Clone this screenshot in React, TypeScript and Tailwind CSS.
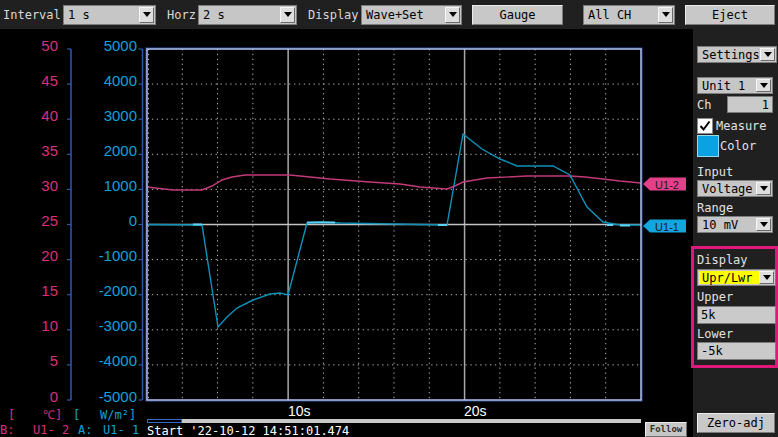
import React from 'react'

const X0 = 147
const X1 = 641
const Y0 = 20
const Y1 = 371
const DX = (X1 - X0) / 14
const DY = (Y1 - Y0) / 10
const TOP = 29 // page y where the chart svg starts

const pinkLabels = ['50', '45', '40', '35', '30', '25', '20', '15', '10', '5', '0']
const blueLabels = ['5000', '4000', '3000', '2000', '1000', '0', '-1000', '-2000', '-3000', '-4000', '-5000']

// trace points in page coordinates
const pinkTrace = [
  [147, 187], [173, 190], [202, 190], [212, 186], [222, 180], [232, 177], [245, 175], [290, 175],
  [330, 179], [370, 182], [400, 184], [420, 187], [447, 189], [455, 186], [463, 182], [487, 178],
  [527, 176], [570, 176], [585, 177], [603, 179], [620, 181], [641, 183],
]
const blueTrace = [
  [147, 224.5], [202, 225], [218, 327], [227, 317], [237, 308], [253, 300], [270, 294], [280, 293],
  [288, 295], [307, 223], [320, 222], [340, 223], [447, 225], [463, 134], [482, 149], [500, 159],
  [517, 166], [553, 166], [570, 175], [587, 207], [603, 222], [620, 225], [641, 225],
]
const highlights = [
  [193, 202, 224.5], [307, 335, 222.5], [438, 447, 225], [607, 613, 225], [620, 630, 225.5],
]

const toPts = (pts: number[][]) => pts.map(([x, y]) => `${x},${y - TOP}`).join(' ')

const Arrow = () => (
  <div className="flex h-full w-[15px] items-center justify-center border border-t-[#f6f6f6] border-l-[#f6f6f6] border-r-[#6a6a6a] border-b-[#6a6a6a] bg-[#dedede]">
    <div className="h-0 w-0 border-l-[4px] border-r-[4px] border-t-[5px] border-l-transparent border-r-transparent border-t-black" />
  </div>
)

const Select = ({ value, className = '', textBg = '' }: { value: string; className?: string; textBg?: string }) => (
  <div className={`flex items-stretch border border-[#7c7c7c] bg-[#c6c6c6] p-[1px] ${className}`}>
    <span className={`flex flex-1 items-center pl-[3px] text-[12px] leading-none text-black ${textBg}`}>{value}</span>
    <Arrow />
  </div>
)

const Button = ({ label, className = '' }: { label: string; className?: string }) => (
  <div className={`flex items-center justify-center border border-t-[#ececec] border-l-[#ececec] border-r-[#7a7a7a] border-b-[#7a7a7a] bg-[#c8c8c8] text-[12px] leading-none text-black ${className}`}>
    {label}
  </div>
)

const Field = ({ value, className = '' }: { value: string; className?: string }) => (
  <div className={`flex items-center border border-[#7c7c7c] bg-[#cacaca] px-[3px] text-[12px] leading-none text-black ${className}`}>
    {value}
  </div>
)

const Chart = () => (
  <svg width="693" height="375" className="block">
    {/* left axes */}
    <line x1="71" y1={Y0} x2="71" y2={Y1} stroke="#2c5aa8" strokeWidth="1.5" />
    <line x1="142.5" y1={Y0} x2="142.5" y2={Y1} stroke="#2c5aa8" strokeWidth="1.5" />
    {pinkLabels.map((l, j) => {
      const y = Y0 + j * DY
      return (
        <g key={l}>
          <line x1="67" y1={y} x2="71" y2={y} stroke="#2c5aa8" strokeWidth="1.2" />
          <line x1="138.5" y1={y} x2="142.5" y2={y} stroke="#2c5aa8" strokeWidth="1.2" />
          <text x="58" y={y + 1.5} textAnchor="end" fontSize="15" fill="#d8307e" fontFamily="Liberation Sans, Arial, sans-serif">
            {l}
          </text>
          <text x="137" y={y + 1.5} textAnchor="end" fontSize="15" fill="#12a0d8" fontFamily="Liberation Sans, Arial, sans-serif">
            {blueLabels[j]}
          </text>
        </g>
      )
    })}

    {/* grid */}
    {Array.from({ length: 14 }, (_, i) => {
      const x = X0 + i * DX
      if (i === 4 || i === 9) return <line key={i} x1={x} y1={Y0} x2={x} y2={Y1} stroke="#a8a8a8" strokeWidth="1.5" />
      return <line key={i} x1={i === 0 ? x + 1.5 : x} y1={Y0} x2={i === 0 ? x + 1.5 : x} y2={Y1} stroke="#b4b4b4" strokeWidth="1" strokeDasharray="1.3 3.6" />
    })}
    {Array.from({ length: 9 }, (_, k) => {
      const j = k + 1
      const y = Y0 + j * DY
      if (j === 5) return null
      return <line key={j} x1={X0} y1={y} x2={X1} y2={y} stroke="#b4b4b4" strokeWidth="1" strokeDasharray="1.3 3.6" />
    })}

    {/* traces */}
    <polyline points={toPts(pinkTrace)} fill="none" stroke="#c23a78" strokeWidth="1.4" />
    <line x1={X0} y1={Y0 + 5 * DY} x2={X1} y2={Y0 + 5 * DY} stroke="#c4c4c4" strokeWidth="1.6" />
    <polyline points={toPts(blueTrace)} fill="none" stroke="#0e92b8" strokeWidth="1.4" />
    {highlights.map(([a, b, y]) => (
      <line key={a} x1={a} y1={y - TOP} x2={b} y2={y - TOP} stroke="#5cd2f6" strokeWidth="2" />
    ))}

    {/* frame */}
    <rect x={X0 - 1} y={Y0 - 1} width={X1 - X0 + 2} height={Y1 - Y0 + 2} fill="none" stroke="#2c50a0" strokeWidth="1" />
    <rect x={X0} y={Y0} width={X1 - X0} height={Y1 - Y0} fill="none" stroke="#b4c4f4" strokeWidth="1.5" />

    {/* channel markers */}
    <polygon points="643,155 650,148.5 686,148.5 686,161.5 650,161.5" fill="#e4408a" />
    <text x="667" y="159.5" textAnchor="middle" fontSize="11" fill="#1a1a1a" fontFamily="Liberation Sans, Arial, sans-serif">U1-2</text>
    <polygon points="643,197 650,190.5 686,190.5 686,203.5 650,203.5" fill="#12a6de" />
    <text x="667" y="201.5" textAnchor="middle" fontSize="11" fill="#1a1a1a" fontFamily="Liberation Sans, Arial, sans-serif">U1-1</text>
  </svg>
)

export default function App() {
  return (
    <div className="flex h-[437px] w-[778px] flex-col overflow-hidden bg-black font-['DejaVu_Sans_Mono',monospace]">
      {/* Top bar */}
      <div className="flex h-[29px] items-center bg-[#202020] pl-[3px] text-[12px] text-[#d8d8d8]">
        <span className="w-[58px]">Interval</span>
        <Select value="1 s" className="ml-[2px] h-[20px] w-[93px]" />
        <span className="ml-[11px] w-[29px]">Horz</span>
        <Select value="2 s" className="ml-[2px] h-[20px] w-[99px]" />
        <span className="ml-[11px] w-[51px]">Display</span>
        <Select value="Wave+Set" className="ml-[2px] h-[20px] w-[101px]" />
        <Button label="Gauge" className="ml-[10px] h-[20px] w-[91px]" />
        <Select value="All CH" className="ml-[20px] h-[20px] w-[92px]" />
        <Button label="Eject" className="ml-[10px] h-[20px] w-[90px]" />
      </div>

      <div className="flex flex-1">
        {/* Main chart area */}
        <div className="flex w-[693px] flex-col">
          <Chart />
          <div className="flex h-[33px]">
            {/* units */}
            <div className="w-[147px] pt-[3px] text-[12px]">
              <div className="flex h-[15px] items-center leading-none">
                <span className="ml-[8px] w-[35px] text-[#d8307e]">[</span>
                <span className="w-[24px] text-[#d8307e]">℃]</span>
                <span className="ml-[6px] w-[27px] text-[#12a0d8]">[</span>
                <span className="text-[#12a0d8]">W/m²]</span>
              </div>
              <div className="flex h-[15px] items-center leading-none">
                <span className="w-[33px] text-[#d8307e]">B:</span>
                <span className="w-[45px] text-[#d8307e]">U1- 2</span>
                <span className="w-[25px] text-[#12a0d8]">A:</span>
                <span className="text-[#12a0d8]">U1- 1</span>
              </div>
            </div>
            {/* time axis, scroll, start */}
            <div className="flex w-[494px] flex-col">
              <div className="flex h-[14px] items-center pl-[141px] font-['Liberation_Sans',Arial,sans-serif] text-[14px] leading-none text-white">
                <span className="w-[176px]">10s</span>
                <span>20s</span>
              </div>
              <div className="mt-[1px] flex h-[5px]">
                <div className="w-[35px] border border-[#3a66c8] bg-black" />
                <div className="flex-1 bg-[#c8c8c8]" />
              </div>
              <div className="mt-[2px] text-[12px] leading-[12px] text-white">Start '22-10-12 14:51:01.474</div>
            </div>
            <div className="flex-1 pl-[4px] pt-[18px]">
              <div className="flex h-[15px] w-[42px] items-center justify-center border border-t-[#ececec] border-l-[#ececec] border-r-[#707070] border-b-[#707070] bg-[#c6c6c6] text-[9px] font-bold leading-none text-[#303030]">
                Follow
              </div>
            </div>
          </div>
        </div>

        {/* Right panel */}
        <div className="flex w-[85px] flex-col bg-[#202020] pl-[4px] text-[12px] leading-none text-[#e2e2e2]">
          <Select value="Settings" className="mt-[17px] h-[17px] w-[80px]" />
          <Select value="Unit 1" className="mt-[14px] h-[17px] w-[76px]" />
          <div className="mt-[2px] flex h-[17px] items-center">
            <span className="w-[30px]">Ch</span>
            <Field value="1" className="h-[17px] w-[46px] justify-end" />
          </div>
          <div className="mt-[4px] flex h-[17px] items-center">
            <div className="flex h-[16px] w-[16px] items-center justify-center border border-[#8a8a8a] bg-white">
              <svg width="12" height="12" viewBox="0 0 12 12">
                <polyline points="1.5,6 4.5,9.5 10.5,1.5" fill="none" stroke="black" strokeWidth="2" />
              </svg>
            </div>
            <span className="ml-[3px]">Measure</span>
          </div>
          <div className="mt-[1px] flex h-[22px] items-center">
            <div className="h-[22px] w-[22px] border border-[#9ad8f0] bg-[#0aa2e2]" />
            <span className="ml-[1px]">Color</span>
          </div>
          <div className="mt-[7px] flex h-[15px] items-center">Input</div>
          <Select value="Voltage" className="mt-[1px] h-[17px] w-[76px]" />
          <div className="mt-[3px] flex h-[15px] items-center">Range</div>
          <Select value="10 mV" className="mt-[1px] h-[17px] w-[76px]" />

          <div className="-ml-[6px] mt-[13px] flex h-[122px] w-[87px] flex-col border-[3px] border-[#e0187c] pl-[3px]">
            <div className="mt-[3px] flex h-[15px] items-center">Display</div>
            <Select value="Upr/Lwr" textBg="bg-[#ffff00]" className="mt-[2px] h-[17px] w-[79px]" />
            <div className="mt-[3px] flex h-[15px] items-center">Upper</div>
            <Field value="5k" className="mt-[2px] h-[18px] w-[79px]" />
            <div className="mt-[2px] flex h-[15px] items-center">Lower</div>
            <Field value="-5k" className="mt-[1px] h-[18px] w-[79px]" />
          </div>

          <Button label="Zero-adj" className="mt-[45px] h-[20px] w-[78px]" />
        </div>
      </div>
    </div>
  )
}
